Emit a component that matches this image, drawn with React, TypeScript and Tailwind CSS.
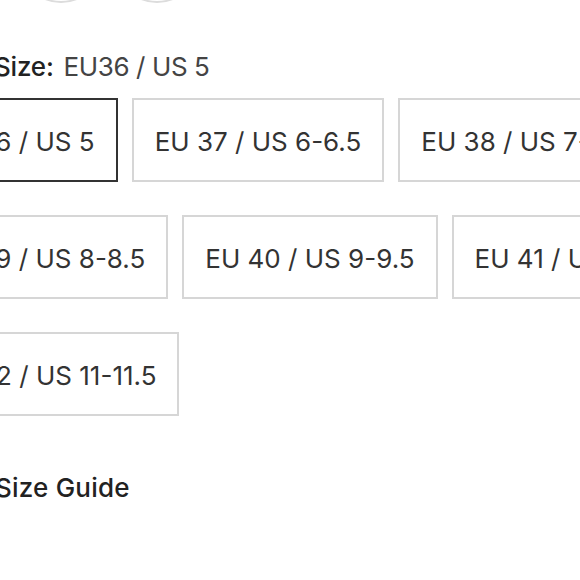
const SIZES = [
  "EU 36 / US 5",
  "EU 37 / US 6-6.5",
  "EU 38 / US 7-7.5",
  "EU 39 / US 8-8.5",
  "EU 40 / US 9-9.5",
  "EU 41 / US 10-10.5",
  "EU 42 / US 11-11.5",
];

export default function App() {
  const selected = SIZES[0];

  return (
    <div className="h-[580px] w-[580px] overflow-hidden bg-white font-['Inter','Noto_Sans',sans-serif] text-[26px] text-[#333]">
      {/* colour swatches, mostly scrolled out of view */}
      <div className="-mt-[81px] flex gap-[12px] pl-[19px]">
        <span className="size-[84px] rounded-full border-2 border-[#dcdcdc]" />
        <span className="size-[84px] rounded-full border-2 border-[#dcdcdc]" />
      </div>

      <div className="-ml-[6px] mt-[43px] flex h-[40px] items-center gap-[10px]">
        <span className="font-medium tracking-[-0.2px] text-[#222]">Size:</span>
        <span className="tracking-[-0.4px] text-[#444]">EU36 / US 5</span>
      </div>

      <div className="-ml-[86px] mt-[12px] flex w-[900px] shrink-0 flex-wrap gap-x-[14px] gap-y-[33px]">
        {SIZES.map((size) => (
          <button
            key={size}
            className={
              size === selected
                ? "flex h-[84px] items-center whitespace-nowrap border-2 border-[#333] px-[21px] pt-[3px]"
                : "flex h-[84px] items-center whitespace-nowrap border-2 border-[#d6d6d6] px-[21px] pt-[3px]"
            }
          >
            {size}
          </button>
        ))}
      </div>

      <div className="-ml-[5px] mt-[51px] flex h-[40px] items-center font-medium tracking-[0.2px] text-[#222]">
        Size Guide
      </div>
    </div>
  );
}
